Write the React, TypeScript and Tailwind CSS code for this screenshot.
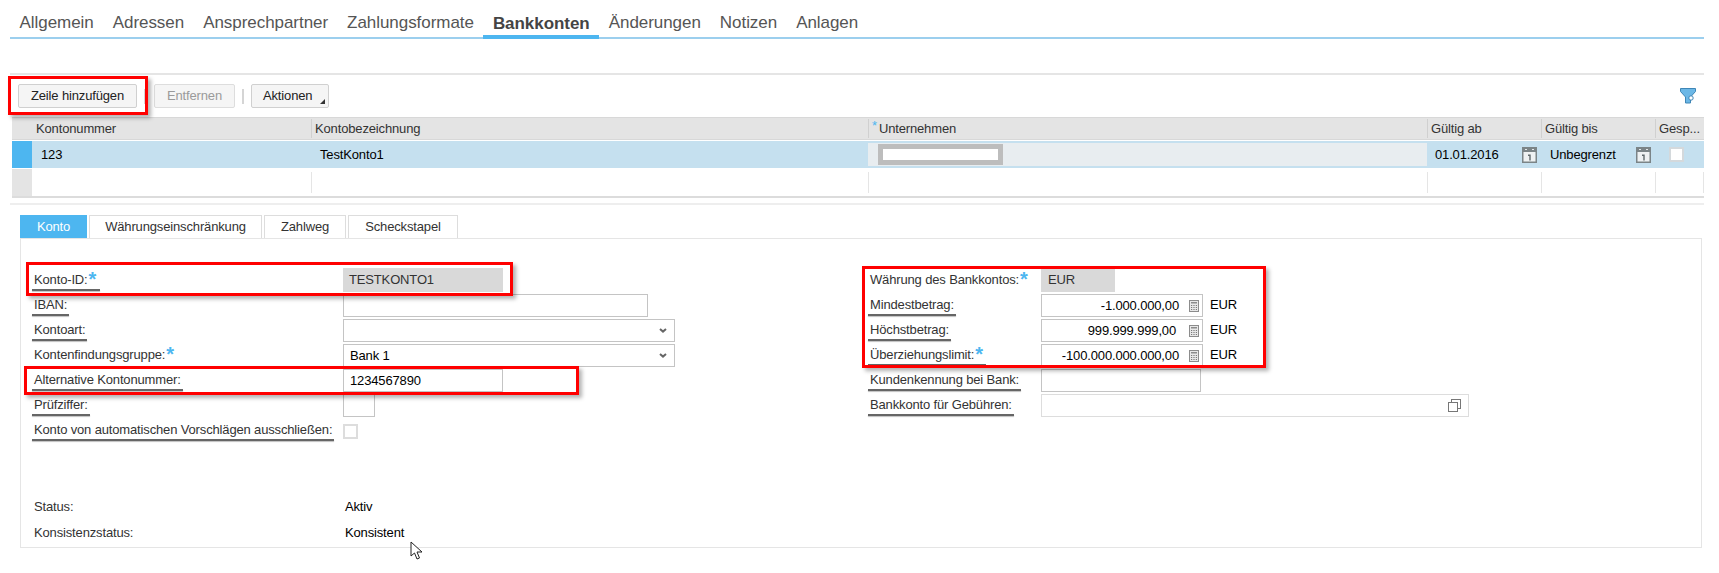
import React from "react"

const tabs = ["Allgemein", "Adressen", "Ansprechpartner", "Zahlungsformate", "Bankkonten", "Änderungen", "Notizen", "Anlagen"]
const cols = "grid-cols-[20px_279px_557px_559px_114px_114px_1fr]"

function CalendarIcon() {
  return (
    <svg width="15" height="16" viewBox="0 0 15 16" className="shrink-0">
      <rect x="0.75" y="0.75" width="13.5" height="14.5" fill="#eef1f2" stroke="#7b8487" strokeWidth="1.5" />
      <rect x="1" y="1" width="13" height="4" fill="#7b8487" />
      <rect x="3" y="2" width="2" height="1" fill="#e4e8ea" />
      <rect x="10" y="2" width="2" height="1" fill="#e4e8ea" />
      <path d="M6 7.5h2.7v6H7.3V9H6z" fill="#5f686b" />
    </svg>
  )
}

function CalcIcon() {
  return (
    <svg width="10" height="12" viewBox="0 0 10 12" className="shrink-0">
      <rect x="0.5" y="0.5" width="9" height="11" fill="#e8e8e8" stroke="#8c8c8c" />
      <rect x="2" y="2" width="6" height="1.5" fill="#8c8c8c" />
      <path d="M2 5h1.2v1H2zM4.4 5h1.2v1H4.4zM6.8 5H8v1H6.8zM2 7h1.2v1H2zM4.4 7h1.2v1H4.4zM6.8 7H8v1H6.8zM2 9h1.2v1H2zM4.4 9h1.2v1H4.4zM6.8 9H8v1H6.8z" fill="#7a7a7a" />
    </svg>
  )
}

function Label({ children, marked, star }: { children: React.ReactNode; marked?: boolean; star?: boolean }) {
  return (
    <span className="relative inline-block whitespace-nowrap text-[#333]">
      {children}
      {star && <span className="absolute ml-px -mt-px text-[20px] font-bold leading-[20px] text-[#4db6f0]">*</span>}
      {star && <span className="inline-block w-[10px]" />}
      {marked && <span className="absolute -left-[2px] -right-[2px] top-[19px] h-[2px] bg-[#666] shadow-[0_1px_1px_rgba(0,0,0,0.25)]" />}
    </span>
  )
}

function Field({ className = "", children }: { className?: string; children?: React.ReactNode }) {
  return <div className={"flex h-[23px] items-center border border-[#c4c4c4] bg-white px-[6px] " + className}>{children}</div>
}

function Row({ label, children }: { label: React.ReactNode; children?: React.ReactNode }) {
  return (
    <div className="flex h-[25px] items-end">
      <div className="flex h-[23px] items-center pb-[2px]">{label}</div>
      {children}
    </div>
  )
}

function Chevron() {
  return (
    <svg width="8" height="5" viewBox="0 0 8 5" className="ml-auto mr-[1px]">
      <path d="M1 1l3 2.6L7 1" fill="none" stroke="#666" strokeWidth="2" />
    </svg>
  )
}

function Amount({ value, pad }: { value: string; pad: string }) {
  return (
    <>
      <Field className="w-[162px] justify-end pr-[3px]">
        <span className={pad}>{value}</span>
        <CalcIcon />
      </Field>
      <span className="ml-[7px] self-center pt-[1px] text-black">EUR</span>
    </>
  )
}

export default function App() {
  return (
    <div className="relative h-[573px] w-[1719px] overflow-hidden bg-white font-['Liberation_Sans',Arial,sans-serif] text-[13px] tracking-[-0.15px] text-black">
      {/* Main tabs */}
      <div className="ml-[10px] mr-[15px] flex h-[39px] items-end border-b-2 border-[#9ccfee] tracking-[-0.05px]">
        {tabs.map((t) => (
          <div
            key={t}
            className={
              t === "Bankkonten"
                ? "-mb-[2px] flex h-[30px] items-center border-b-[4px] border-[#4db6f0] px-[9.5px] pt-[3px] text-[17px] font-bold text-[#444]"
                : "flex h-[28px] items-center px-[9.5px] pb-[1px] text-[17px] text-[#555]"
            }
          >
            {t}
          </div>
        ))}
      </div>

      {/* Toolbar */}
      <div className="ml-[10px] mr-[15px] mt-[34px] flex h-[44px] items-center border-t-2 border-[#e5e5e5] px-[8px]">
        <button className="flex h-[24px] w-[119px] items-center justify-center rounded-[2px] border border-[#d0d0d0] bg-[#f5f5f5] text-[#222]">Zeile hinzufügen</button>
        <span className="ml-[7px] h-[15px] w-[2px] bg-[#d5d5d5]" />
        <button className="ml-[8px] flex h-[24px] w-[81px] items-center justify-center rounded-[2px] border border-[#ddd] bg-[#f5f5f5] text-[#9a9a9a]">Entfernen</button>
        <span className="ml-[7px] h-[15px] w-[2px] bg-[#d5d5d5]" />
        <button className="relative ml-[7px] flex h-[24px] w-[78px] items-center rounded-[2px] border border-[#d0d0d0] bg-[#f5f5f5] pl-[11px] text-[#222]">
          Aktionen
          <span className="absolute bottom-[3px] right-[3px] h-0 w-0 border-b-[5px] border-l-[5px] border-b-[#333] border-l-transparent" />
        </button>
        <svg width="16" height="16" viewBox="0 0 16 16" className="ml-auto">
          <path d="M0.5 0.5h15v3L10.5 9v6h-5V9L.5 3.5z" fill="#6bb7e6" stroke="#3f86b6" />
          <circle cx="11" cy="10" r="2.2" fill="#fff" stroke="#3f86b6" />
          <path d="M10.5 12v3" stroke="#3f86b6" />
        </svg>
      </div>

      {/* Table */}
      <div className="ml-[10px] mr-[15px] border-b-2 border-[#eee] pb-[5px]">
        <div className="ml-[2px] border-b-2 border-[#dcdcdc]">
          <div className={"grid h-[23px] items-center border-y border-[#d8d8d8] bg-[#e4e4e4] text-[#333] " + cols}>
            <div />
            <div className="pl-[4px]">Kontonummer</div>
            <div className="border-l border-[#d0d0d0] pl-[3px]">Kontobezeichnung</div>
            <div className="border-l border-[#d0d0d0] pl-[3px]"><span className="relative -top-[3px] text-[#4db6f0]">*</span><span className="ml-[2px]">Unternehmen</span></div>
            <div className="border-l border-[#d0d0d0] pl-[3px]">Gültig ab</div>
            <div className="border-l border-[#d0d0d0] pl-[3px]">Gültig bis</div>
            <div className="border-l border-[#d0d0d0] pl-[3px]">Gesp...</div>
          </div>
          <div className={"mt-px grid h-[27px] items-center bg-[#c5e0ef] " + cols}>
            <div className="h-full bg-[#4db6f0]" />
            <div className="pl-[9px]">123</div>
            <div className="pl-[9px]">TestKonto1</div>
            <div className="flex h-[23px] items-center bg-[#e8edf0] pl-[10px]">
              <div className="flex h-[21px] w-[125px] items-center justify-center bg-[#bdbdbd]">
                <div className="h-[11px] w-[115px] bg-white" />
              </div>
            </div>
            <div className="flex items-center pl-[8px] pr-[4px]">01.01.2016<span className="ml-auto"><CalendarIcon /></span></div>
            <div className="flex items-center pl-[9px] pr-[4px]">Unbegrenzt<span className="ml-auto"><CalendarIcon /></span></div>
            <div className="pl-[14px]"><div className="h-[15px] w-[15px] border-2 border-[#d4d9dc] bg-white" /></div>
          </div>
          <div className={"mt-px grid h-[27px] items-stretch py-[3px] " + cols}>
            <div className="-my-[3px] bg-[#e4e4e4]" />
            <div />
            <div className="border-l border-[#e5e5e5]" />
            <div className="border-l border-[#e5e5e5]" />
            <div className="border-l border-[#e5e5e5]" />
            <div className="border-l border-[#e5e5e5]" />
            <div className="border-x border-[#e5e5e5]" />
          </div>
        </div>
      </div>

      {/* Detail tabs */}
      <div className="ml-[20px] mr-[17px] mt-[10px] flex h-[24px] items-end gap-[2px] border-b border-[#e5e5e5] text-[#333]">
        <div className="flex h-[23px] w-[67px] items-center justify-center bg-[#4db6f0] text-white">Konto</div>
        <div className="flex h-[23px] w-[173px] items-center justify-center border border-b-0 border-[#ddd]">Währungseinschränkung</div>
        <div className="flex h-[23px] w-[82px] items-center justify-center border border-b-0 border-[#ddd]">Zahlweg</div>
        <div className="flex h-[23px] w-[110px] items-center justify-center border border-b-0 border-[#ddd]">Scheckstapel</div>
      </div>

      {/* Detail form */}
      <div className="ml-[20px] mr-[17px] h-[309px] border-x border-b border-[#e5e5e5] pl-[13px] pt-[28px]">
        <div className="flex">
          <div className="w-[836px]">
            <div className="[&>div>div:first-child]:w-[309px]">
              <Row label={<Label marked star>Konto-ID:</Label>}>
                <div className="flex h-[24px] w-[160px] items-center bg-[#d9d9d9] px-[6px] text-[#333]">TESTKONTO1</div>
              </Row>
              <Row label={<Label marked>IBAN:</Label>}><Field className="w-[305px]" /></Row>
              <Row label={<Label marked>Kontoart:</Label>}><Field className="w-[332px]"><Chevron /></Field></Row>
              <Row label={<Label star>Kontenfindungsgruppe:</Label>}><Field className="w-[332px]">Bank 1<Chevron /></Field></Row>
              <Row label={<Label marked>Alternative Kontonummer:</Label>}><Field className="w-[160px]">1234567890</Field></Row>
              <Row label={<Label marked>Prüfziffer:</Label>}><Field className="w-[32px]" /></Row>
              <Row label={<Label marked>Konto von automatischen Vorschlägen ausschließen:</Label>}>
                <div className="mb-[3px] h-[15px] w-[15px] border-2 border-[#ddd] bg-white" />
              </Row>
            </div>
            <div className="mt-[52px] [&>div]:flex [&>div]:h-[26px] [&>div]:items-center [&>div>span:first-child]:w-[311px]">
              <div><span className="text-[#333]">Status:</span><span>Aktiv</span></div>
              <div><span className="text-[#333]">Konsistenzstatus:</span><span>Konsistent</span></div>
            </div>
          </div>
          <div className="[&>div>div:first-child]:w-[171px]">
            <Row label={<Label star>Währung des Bankkontos:</Label>}>
              <div className="flex h-[24px] w-[74px] items-center bg-[#d9d9d9] px-[7px] text-[#333]">EUR</div>
            </Row>
            <Row label={<Label marked>Mindestbetrag:</Label>}><Amount value="-1.000.000,00" pad="mr-[10px]" /></Row>
            <Row label={<Label marked>Höchstbetrag:</Label>}><Amount value="999.999.999,00" pad="mr-[13px]" /></Row>
            <Row label={<Label marked star>Überziehungslimit:</Label>}><Amount value="-100.000.000.000,00" pad="mr-[10px]" /></Row>
            <Row label={<Label marked>Kundenkennung bei Bank:</Label>}><Field className="w-[160px]" /></Row>
            <Row label={<Label marked>Bankkonto für Gebühren:</Label>}>
              <Field className="w-[428px] border-[#ddd]">
                <svg width="13" height="13" viewBox="0 0 13 13" className="ml-auto mr-[1px]">
                  <rect x="3.5" y="0.5" width="9" height="9" fill="#fff" stroke="#777" />
                  <rect x="0.5" y="3.5" width="9" height="9" fill="#fff" stroke="#777" />
                </svg>
              </Field>
            </Row>
          </div>
        </div>
      </div>

      {/* Red highlight boxes drawn over the form */}
      <div className="pointer-events-none absolute left-[8px] top-[76px] h-[39px] w-[140px] border-[3px] border-[#f00] shadow-[3px_3px_4px_rgba(0,0,0,0.3)]" />
      <div className="pointer-events-none absolute left-[26px] top-[262px] h-[34px] w-[487px] border-[3px] border-[#f00] shadow-[3px_3px_4px_rgba(0,0,0,0.3)]" />
      <div className="pointer-events-none absolute left-[24px] top-[366px] h-[29px] w-[555px] border-[3px] border-[#f00] shadow-[3px_3px_4px_rgba(0,0,0,0.3)]" />
      <div className="pointer-events-none absolute left-[862px] top-[266px] h-[102px] w-[404px] border-[3px] border-[#f00] shadow-[3px_3px_4px_rgba(0,0,0,0.3)]" />

      {/* Mouse pointer */}
      <svg width="14" height="20" viewBox="0 0 14 20" className="absolute left-[410px] top-[541px]">
        <path d="M1 1v14l3.5-3 2.5 6 2.5-1-2.5-6H12z" fill="#fff" stroke="#222" strokeWidth="1" />
      </svg>
    </div>
  )
}
